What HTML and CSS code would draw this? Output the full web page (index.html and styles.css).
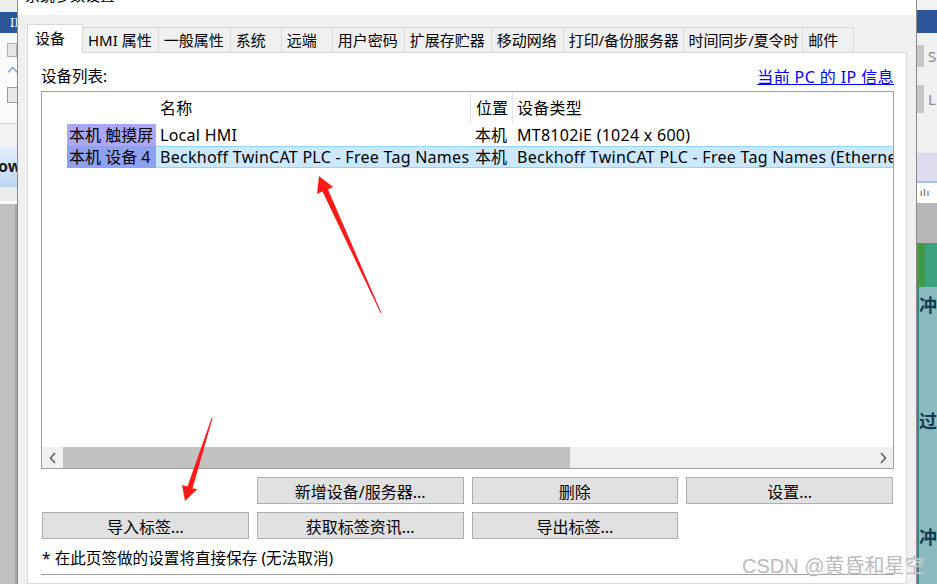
FILE: index.html
```html
<!DOCTYPE html>
<html lang="zh-CN">
<head>
    <meta charset="UTF-8">
    <title>系统参数设置</title>
    <link rel="stylesheet" href="styles.css">
</head>
<body>
<div class="desk">
    <!-- application window behind the dialog, left edge -->
    <div class="app-left">
        <div class="al-top"></div>
        <div class="al-title">II</div>
        <div class="al-tools">
            <div class="al-ico"></div>
            <div class="al-wave">ヘ</div>
            <div class="al-box"></div>
        </div>
        <div class="al-sep"></div>
        <div class="al-tab">ow</div>
        <div class="al-strip"></div>
        <div class="al-work"></div>
    </div>

    <div class="dialog">
        <div class="titlebar">
            <span class="title">系统参数设置</span>
            <span class="close">×</span>
        </div>
        <div class="dlg-body">
            <div class="tabs">
                <div class="tab active">设备</div>
                <div class="tab">HMI 属性</div>
                <div class="tab">一般属性</div>
                <div class="tab">系统</div>
                <div class="tab">远端</div>
                <div class="tab">用户密码</div>
                <div class="tab">扩展存贮器</div>
                <div class="tab">移动网络</div>
                <div class="tab tight">打印/备份服务器</div>
                <div class="tab tight">时间同步/夏令时</div>
                <div class="tab">邮件</div>
            </div>
            <div class="panel">
                <div class="panel-head">
                    <span>设备列表:</span>
                    <a class="iplink" href="#">当前 PC 的 IP 信息</a>
                </div>
                <div class="list">
                    <div class="list-rows">
                        <div class="row head">
                            <div class="hc-blank"></div>
                            <div class="c-name sep">名称</div>
                            <div class="c-pos sep">位置</div>
                            <div class="c-type">设备类型</div>
                        </div>
                        <div class="row">
                            <div class="c-indent"></div>
                            <div class="c-key key-hmi">本机 触摸屏</div>
                            <div class="c-name">Local HMI</div>
                            <div class="c-pos">本机</div>
                            <div class="c-type">MT8102iE (1024 x 600)</div>
                        </div>
                        <div class="row selected">
                            <div class="c-indent"></div>
                            <div class="c-key key-dev">本机 设备 4</div>
                            <div class="c-name">Beckhoff TwinCAT PLC - Free Tag Names</div>
                            <div class="c-pos">本机</div>
                            <div class="c-type">Beckhoff TwinCAT PLC - Free Tag Names (Ethernet)</div>
                        </div>
                    </div>
                    <div class="hscroll">
                        <div class="sb-btn">
                            <svg width="8" height="12" viewBox="0 0 8 12"><path d="M6 1 L1.5 6 L6 11" fill="none" stroke="#606060" stroke-width="1.6"/></svg>
                        </div>
                        <div class="sb-thumb"></div>
                        <div class="sb-track"></div>
                        <div class="sb-btn">
                            <svg width="8" height="12" viewBox="0 0 8 12"><path d="M2 1 L6.5 6 L2 11" fill="none" stroke="#606060" stroke-width="1.6"/></svg>
                        </div>
                    </div>
                </div>
                <div class="btns">
                    <button class="btn btn-first">新增设备/服务器...</button>
                    <button class="btn">删除</button>
                    <button class="btn">设置...</button>
                    <button class="btn">导入标签...</button>
                    <button class="btn">获取标签资讯...</button>
                    <button class="btn">导出标签...</button>
                </div>
                <div class="note">* 在此页签做的设置将直接保存 (无法取消)</div>
            </div>
        </div>
    </div>

    <!-- application window behind the dialog, right edge -->
    <div class="app-right">
        <div class="ar-top"></div>
        <div class="ar-title"></div>
        <div class="ar-tools">
            <div class="ar-tool"><span class="ar-knob"></span>S</div>
            <div class="ar-tool"><span class="ar-knob"></span>L</div>
        </div>
        <div class="ar-head"></div>
        <div class="ar-ruler">ılı</div>
        <div class="ar-gray"></div>
        <div class="ar-green"></div>
        <div class="ar-teal">
            <div class="ar-edge"></div>
            <div class="ar-text">
                <span>冲</span>
                <span>过</span>
                <span>冲</span>
            </div>
        </div>
    </div>
</div>

<!-- red annotation arrows -->
<svg class="marks" width="937" height="584" viewBox="0 0 937 584">
    <polygon points="319,176 333,187 328,189.5 381.5,313 380.5,313 322.5,191.5 317,194" fill="#ff1a1a"/>
    <polygon points="185,501 197.5,489 192.5,488.5 212.6,418 211.6,418 187.5,486.5 182,485" fill="#ff1a1a"/>
</svg>

<div class="watermark">CSDN @黄昏和星空</div>
</body>
</html>
```

FILE: styles.css
```css
body {
    margin: 0;
    width: 937px;
    height: 584px;
    overflow: hidden;
    position: relative;
    background: #fff;
    color: #000;
    font-family: "Noto Sans", "Noto Sans CJK SC", sans-serif;
}
.desk {
    display: flex;
    height: 584px;
}

/* background app, left */
.app-left {
    width: 17px;
    display: flex;
    flex-direction: column;
    overflow: hidden;
    flex-shrink: 0;
}
.app-left > div { flex-shrink: 0; }
.al-top { height: 12px; background: #ededed; }
.al-title {
    height: 21px;
    background: #2b579a;
    color: #fff;
    font-size: 13px;
    line-height: 21px;
    padding-left: 10px;
}
.al-tools {
    height: 90px;
    background: #fbfbfb;
    padding-left: 7px;
    padding-top: 10px;
    box-sizing: border-box;
}
.al-ico { width: 8px; height: 12px; border: 1px solid #b0b0b0; background: #e6e6e6; }
.al-wave { color: #5b8fd6; font-size: 13px; line-height: 18px; margin-top: 4px; }
.al-box { width: 9px; height: 14px; border: 1px solid #9a9a9a; background: #e8e8e8; margin-top: 8px; }
.al-sep { height: 22px; border-top: 1px solid #d0d0d0; background: #f3f3f3; }
.al-tab {
    height: 41px;
    background: linear-gradient(#e3eefa, #bcd6f1);
    font-weight: bold;
    font-size: 16px;
    line-height: 41px;
    margin-left: -2px;
    color: #1a1a1a;
}
.al-strip { height: 14px; background: #ececec; border-bottom: 3px solid #fff; }
.app-left > .al-work { flex: 1; flex-shrink: 1; background: #c0c0c0; border-right: 2px solid #a6a6a6; }

/* dialog */
.dialog {
    width: 900px;
    flex-shrink: 0;
    box-sizing: border-box;
    border-left: 1px solid #8c8c8c;
    border-right: 1px solid #8c8c8c;
    background: #f0f0f0;
    display: flex;
    flex-direction: column;
}
.titlebar {
    height: 15px;
    background: #fff;
    overflow: hidden;
    display: flex;
    justify-content: space-between;
    padding: 0 12px 0 7px;
    font-size: 15px;
}
.title, .close {
    display: block;
    line-height: 22px;
    margin-top: -16px;
}
.dlg-body {
    flex: 1;
    padding: 9px 9px 0 9px;
    display: flex;
    flex-direction: column;
}
.tabs {
    display: flex;
    align-items: flex-end;
    height: 28px;
    font-size: 15px;
}
.tab {
    height: 25px;
    line-height: 24px;
    min-width: 52px;
    box-sizing: border-box;
    padding: 0 6px 0 5px;
    border: 1px solid #d9d9d9;
    border-bottom: none;
    margin-left: -1px;
    background: #f0f0f0;
    white-space: nowrap;
}
.tab.tight { padding: 0 4px 0 5px; letter-spacing: -0.1px; }
.tab.active {
    height: 29px;
    line-height: 27px;
    min-width: 56px;
    margin-left: 0;
    margin-bottom: -1px;
    padding-left: 7px;
    background: #fff;
    position: relative;
    z-index: 1;
}
.panel {
    flex: 1;
    background: #fff;
    border: 1px solid #d9d9d9;
    padding: 9px 12px 0 13px;
}
.panel-head {
    height: 27px;
    margin-bottom: 2px;
    display: flex;
    justify-content: space-between;
    align-items: center;
    font-size: 15.5px;
}
.iplink {
    color: #0000ff;
    text-decoration: underline;
    font-size: 16px;
    letter-spacing: 0.4px;
}

/* device list */
.list {
    height: 378px;
    box-sizing: border-box;
    border: 1px solid #a0a0a0;
    display: flex;
    flex-direction: column;
}
.list-rows {
    flex: 1;
    overflow: hidden;
    font-size: 16px;
    letter-spacing: 0.27px;
}
.row {
    display: flex;
    height: 22px;
    line-height: 22px;
    white-space: nowrap;
}
.row.head {
    height: 32px;
    line-height: 32px;
}
.hc-blank { width: 113px; flex-shrink: 0; }
.sep { border-right: 1px solid #e5e5e5; }
.head .c-name { padding-left: 5px; }
.head .c-pos { padding-left: 5px; }
.head .c-type { padding-left: 4px; }
.c-indent { width: 25px; flex-shrink: 0; }
.c-key {
    width: 89px;
    flex-shrink: 0;
    box-sizing: border-box;
    padding-left: 2px;
    letter-spacing: 0;
}
.key-hmi { background: #aba6f5; }
.key-dev { background: #8fa2ef; }
.c-name {
    width: 316px;
    flex-shrink: 0;
    box-sizing: border-box;
    padding-left: 4px;
    overflow: hidden;
}
.c-pos {
    width: 42px;
    flex-shrink: 0;
    box-sizing: border-box;
    padding-left: 3px;
    letter-spacing: 0;
}
.c-type {
    flex: 1;
    padding-left: 3px;
    overflow: hidden;
}
.selected .c-name,
.selected .c-pos,
.selected .c-type {
    background: #cce8ff;
    border-top: 1px solid #99d1ff;
    border-bottom: 1px solid #99d1ff;
    line-height: 20px;
}
.hscroll {
    height: 21px;
    display: flex;
    background: #f0f0f0;
}
.sb-btn {
    width: 21px;
    display: flex;
    align-items: center;
    justify-content: center;
}
.sb-thumb { width: 507px; background: #c2c2c2; }
.sb-track { flex: 1; }

/* buttons */
.btns {
    display: grid;
    grid-template-columns: repeat(4, 1fr);
    gap: 8px;
    margin: 8px 1px 0 1px;
}
.btn {
    height: 27px;
    background: #e1e1e1;
    border: 1px solid #adadad;
    font-family: "Noto Sans", "Noto Sans CJK SC", sans-serif;
    font-size: 16px;
    color: #000;
    padding: 0;
}
.btn-first { grid-column: 2; }
.note {
    margin-top: 8px;
    height: 22px;
    line-height: 22px;
    padding: 0 0 5px 1px;
    border-bottom: 1px solid #a0a0a0;
    font-size: 15.6px;
}

/* background app, right */
.app-right {
    width: 20px;
    flex-shrink: 0;
    display: flex;
    flex-direction: column;
    overflow: hidden;
    background: #f0f0f0;
}
.app-right > div { flex-shrink: 0; }
.ar-top { height: 10px; background: #f3f3f3; }
.ar-title { height: 23px; background: #2b579a; }
.ar-tools { height: 117px; padding-top: 12px; box-sizing: border-box; }
.ar-tool {
    height: 22px;
    margin-bottom: 18px;
    display: flex;
    align-items: center;
    gap: 4px;
    color: #8a8a8a;
    font-size: 15px;
}
.ar-tool + .ar-tool { height: 28px; }
.ar-knob { width: 7px; height: 100%; background: #c6c6c6; }
.ar-head {
    height: 28px;
    margin-top: 3px;
    background: #dcdcee;
    border-bottom: 2px solid #a9bfe3;
}
.ar-ruler {
    height: 20px;
    background: #fff;
    font-size: 9px;
    line-height: 20px;
    color: #333;
    padding-left: 3px;
    letter-spacing: 1px;
}
.ar-gray { height: 40px; background: #b6b6b6; }
.ar-green {
    height: 44px;
    background: linear-gradient(90deg, #3f9a4a 0, #3f9a4a 8px, #3da17f 8px);
}
.app-right > .ar-teal {
    flex: 1;
    flex-shrink: 1;
    min-height: 0;
    overflow: hidden;
    display: flex;
}
.ar-edge { width: 10px; background: #3a8888; }
.ar-text {
    flex: 1;
    background: #8bbbc1;
    display: flex;
    flex-direction: column;
    padding-top: 4px;
    color: #133d4f;
    font-weight: bold;
    font-size: 18px;
    font-family: "Noto Sans CJK SC", sans-serif;
}
.ar-text span { height: 116px; flex-shrink: 0; }

/* overlays */
.marks {
    position: absolute;
    left: 0;
    top: 0;
    pointer-events: none;
}
.watermark {
    position: absolute;
    left: 742px;
    top: 550px;
    font-family: "Liberation Sans", "Noto Sans CJK SC", sans-serif;
    font-size: 20px;
    color: #bcbcbc;
    white-space: nowrap;
    text-shadow: 0 0 1px #fff;
}
```
